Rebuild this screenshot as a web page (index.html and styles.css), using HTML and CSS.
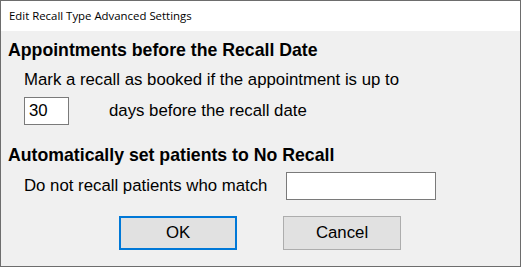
FILE: index.html
```html
<!DOCTYPE html>
<html>
<head>
<meta charset="utf-8">
<link rel="stylesheet" href="styles.css">
</head>
<body>
<div class="window">
  <div class="titlebar"><span class="title">Edit Recall Type Advanced Settings</span></div>
  <div class="content">
    <div class="heading h1">Appointments before the Recall Date</div>
    <div class="indent line">Mark a recall as booked if the appointment is up to</div>
    <div class="indent row row1">
      <div class="input small">30</div>
      <div class="line days">days before the recall date</div>
    </div>
    <div class="heading h2">Automatically set patients to No Recall</div>
    <div class="indent row row2">
      <div class="line label">Do not recall patients who match</div>
      <div class="input wide"></div>
    </div>
    <div class="buttons">
      <div class="btn ok">OK</div>
      <div class="btn cancel">Cancel</div>
    </div>
  </div>
</div>
</body>
</html>
```
FILE: styles.css
```css
html, body {
  margin: 0;
  padding: 0;
  background: #f0f0f0;
}
.window {
  width: 521px;
  height: 267px;
  box-sizing: border-box;
  border: 1px solid #6d6d6d;
  background: #f0f0f0;
  display: flex;
  flex-direction: column;
  font-family: "Liberation Sans", Arial, sans-serif;
  color: #000;
}
.titlebar {
  height: 30px;
  background: #fff;
  display: flex;
  align-items: center;
  padding-left: 8px;
  padding-bottom: 1px;
  box-sizing: border-box;
}
.title {
  font-family: "Open Sans", "Noto Sans", sans-serif;
  font-size: 11.4px;
  color: #000;
}
.content {
  display: flex;
  flex-direction: column;
  padding-left: 7px;
}
.heading {
  font-weight: bold;
  font-size: 17.7px;
  line-height: 20px;
  height: 20px;
}
.h1 { margin-top: 9px; }
.h2 { margin-top: 20px; }
.line {
  font-size: 16.8px;
  line-height: 20px;
  height: 20px;
}
.indent { margin-left: 16px; }
.indent.line { margin-top: 10px; }
.row {
  display: flex;
  align-items: center;
}
.row1 { margin-top: 7px; }
.row2 { margin-top: 7px; }
.input {
  box-sizing: border-box;
  height: 28px;
  border: 1px solid #7a7a7a;
  background: #fff;
  font-size: 16.8px;
  line-height: 26px;
  padding-left: 4px;
}
.small { width: 45px; }
.wide { width: 150px; }
.days { margin-left: 40px; }
.label { width: 262px; }
.buttons {
  display: flex;
  margin-top: 16px;
  padding-left: 111px;
  gap: 46px;
}
.btn {
  box-sizing: border-box;
  width: 118px;
  height: 34px;
  background: #e1e1e1;
  font-size: 16.8px;
  display: flex;
  align-items: center;
  justify-content: center;
}
.ok { border: 2px solid #0078d7; }
.cancel { border: 1px solid #adadad; }
```
